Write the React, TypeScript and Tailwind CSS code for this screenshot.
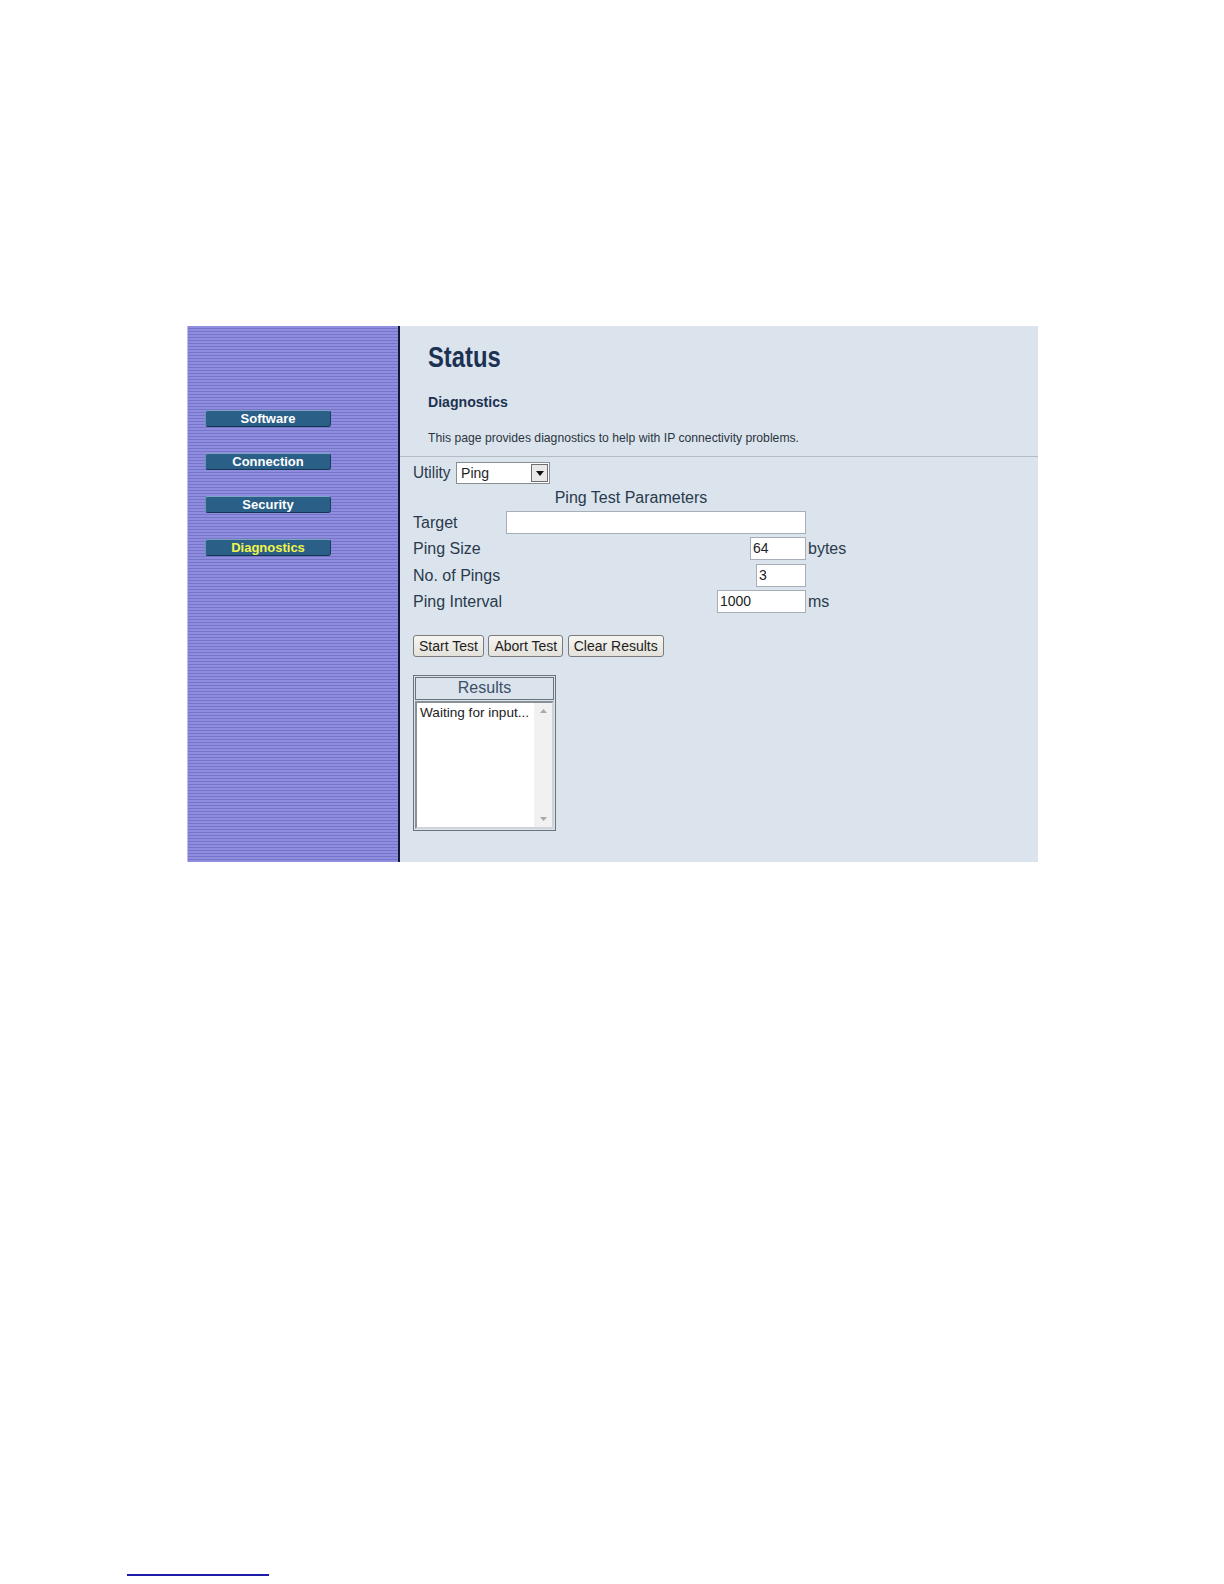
import React from "react";

const NAV = [
  { label: "Software", active: false },
  { label: "Connection", active: false },
  { label: "Security", active: false },
  { label: "Diagnostics", active: true },
];

const ROWS = [
  { label: "Target", value: "", width: "w-[300px]", unit: "" },
  { label: "Ping Size", value: "64", width: "w-[56px]", unit: "bytes" },
  { label: "No. of Pings", value: "3", width: "w-[50px]", unit: "" },
  { label: "Ping Interval", value: "1000", width: "w-[89px]", unit: "ms" },
];

function NavButton({ label, active }: { label: string; active: boolean }) {
  return (
    <div
      className={`flex h-[17px] w-[126px] items-center justify-center rounded-[3px] border border-t-[#7fa3c2] border-l-[#6b90b2] border-r-[#1c3e5c] border-b-[#163450] bg-[#2a5f88] text-[13px] font-bold leading-none ${
        active ? "text-[#f2f54a]" : "text-white"
      }`}
    >
      {label}
    </div>
  );
}

function Field({ value, width }: { value: string; width: string }) {
  return (
    <div
      className={`${width} flex h-[23px] items-center border border-[#a8aeb6] bg-white pl-[2px] text-[14px] text-[#222]`}
    >
      {value}
    </div>
  );
}

function PushButton({ label }: { label: string }) {
  return (
    <div className="flex h-[22px] items-center rounded-[3px] border border-[#7b7b7b] bg-gradient-to-b from-[#f7f6f3] to-[#e3e1da] px-[5px] text-[14px] leading-none text-[#1e1e1e]">
      {label}
    </div>
  );
}

export default function App() {
  return (
    <div className="relative flex h-[1584px] w-[1224px] flex-col bg-white font-['Liberation_Sans',Arial,sans-serif]">
      <div className="ml-[187px] mt-[326px] flex h-[536px] w-[851px]">
        {/* striped nav column */}
        <div className="flex w-[211px] flex-col items-start border-l border-[#b9b8e6] bg-[repeating-linear-gradient(180deg,#8e8de0_0px,#8e8de0_2px,#7574c7_2px,#7574c7_3px)] pl-[17px] pt-[84px]">
          <div className="flex flex-col gap-[26px]">
            {NAV.map((item) => (
              <NavButton key={item.label} label={item.label} active={item.active} />
            ))}
          </div>
        </div>
        <div className="w-[2px] bg-[#15163a]" />

        <div className="flex flex-1 flex-col bg-[#dbe4ed]">
          <div className="border-b border-[#b3bcc5] pb-[11px] pl-[28px] pt-[15px]">
            <div className="origin-left scale-x-[0.82] text-[29px] font-bold leading-[32px] text-[#1d3152]">
              Status
            </div>
            <div className="mt-[20px] origin-left scale-x-[0.94] text-[15px] font-bold leading-[18px] text-[#1d3152]">
              Diagnostics
            </div>
            <div className="mt-[20px] text-[12.2px] leading-[14px] text-[#2b3440]">
              This page provides diagnostics to help with IP connectivity problems.
            </div>
          </div>

          <div className="flex flex-col items-start pl-[13px] text-[16px] text-[#2a3a4c]">
            <div className="mt-[5px] flex h-[22px] items-center gap-[4px]">
              <span className="origin-left scale-x-[0.96] leading-none">Utility</span>
              <div className="flex h-[22px] w-[94px] items-center border border-[#8a8f96] bg-white">
                <span className="flex-1 pl-[4px] text-[14px] text-[#1e1e1e]">Ping</span>
                <div className="mr-[1px] flex h-[18px] w-[17px] items-center justify-center border border-[#6e6e6e] bg-[#e9e9e9]">
                  <svg width="8" height="5" viewBox="0 0 8 5">
                    <path d="M0 0 L8 0 L4 5 Z" fill="#111" />
                  </svg>
                </div>
              </div>
            </div>

            <div className="w-[436px]">
              <div className="mt-[3px] h-[22px] text-center leading-[22px]">Ping Test Parameters</div>
              <div className="mt-[2px] grid grid-cols-[93px_300px_auto] gap-y-[3.3px]">
                {ROWS.map((row) => (
                  <React.Fragment key={row.label}>
                    <div className="leading-[23px]">{row.label}</div>
                    <div className="flex justify-end">
                      <Field value={row.value} width={row.width} />
                    </div>
                    <div className="pl-[2px] leading-[23px]">{row.unit}</div>
                  </React.Fragment>
                ))}
              </div>
            </div>

            <div className="mt-[22px] flex gap-[4.5px]">
              <PushButton label="Start Test" />
              <PushButton label="Abort Test" />
              <PushButton label="Clear Results" />
            </div>

            <div className="mt-[18px] flex h-[156px] w-[143px] flex-col gap-[1px] border border-[#6a727b] p-[1px]">
              <div className="flex h-[23px] items-center justify-center border border-[#6a727b] text-[16px] text-[#3b4f66]">
                Results
              </div>
              <div className="flex flex-1 border-2 border-t-[#8a9097] border-l-[#8a9097] border-r-[#d0d4d8] border-b-[#d0d4d8] bg-white">
                <div className="flex-1 pl-[3px] pt-[2px] text-[13.6px] leading-[16px] text-[#222]">
                  Waiting for input...
                </div>
                <div className="flex w-[18px] flex-col items-center justify-between bg-[#f1f1f1] py-[6px]">
                  <svg width="7" height="4" viewBox="0 0 7 4">
                    <path d="M0 4 L7 4 L3.5 0 Z" fill="#a8a8a8" />
                  </svg>
                  <svg width="7" height="4" viewBox="0 0 7 4">
                    <path d="M0 0 L7 0 L3.5 4 Z" fill="#a8a8a8" />
                  </svg>
                </div>
              </div>
            </div>
          </div>
        </div>
      </div>

      <div className="ml-[127px] mt-[712px] h-[2px] w-[142px] bg-[#1c1ca8]" />
    </div>
  );
}
